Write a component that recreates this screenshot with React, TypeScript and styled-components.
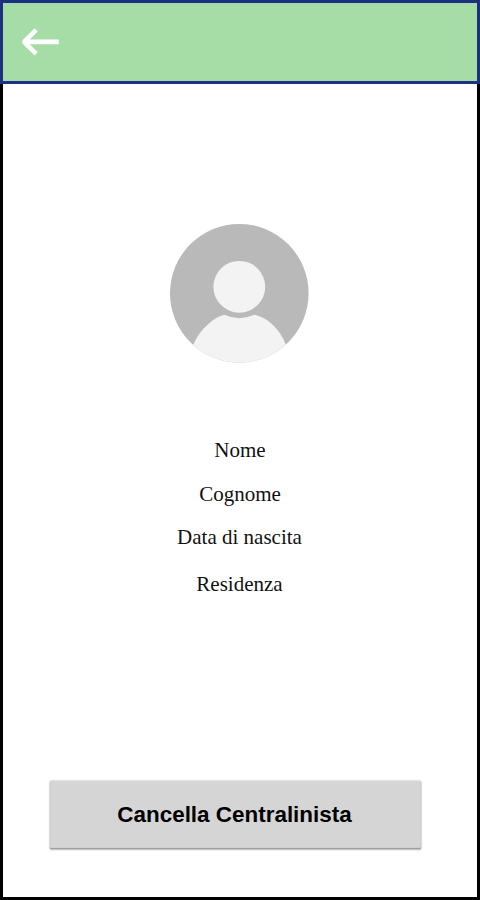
import React from "react";
import styled, { createGlobalStyle } from "styled-components";

const GlobalStyle = createGlobalStyle`
  * { box-sizing: border-box; }
  body { margin: 0; background: #fff; }
`;

const Screen = styled.div`
  width: 480px;
  height: 900px;
  display: flex;
  flex-direction: column;
  background: #fff;
`;

const Header = styled.header`
  height: 84px;
  flex: none;
  display: flex;
  align-items: center;
  padding-left: 18px;
  background: #a6dca6;
  border: 3px solid #1c317f;
`;

const BackButton = styled.button`
  display: flex;
  padding: 0;
  border: 0;
  background: none;
`;

const Content = styled.main`
  flex: 1;
  display: flex;
  flex-direction: column;
  align-items: center;
  padding-top: 139px;
  border: 3px solid #000;
  border-top: 0;
`;

const Avatar = styled.svg`
  display: block;
  flex: none;
`;

const Details = styled.div`
  margin-top: 73px;
  display: flex;
  flex-direction: column;
  align-items: center;
`;

const Detail = styled.span<{ $gap?: number; $nudge?: number }>`
  margin-top: ${({ $gap = 0 }) => $gap}px;
  padding-right: ${({ $nudge = 0 }) => $nudge}px;
  font: 21px/24px "Liberation Serif", "Times New Roman", serif;
  color: #111;
`;

const DeleteButton = styled.button`
  width: 371px;
  height: 68px;
  margin: 185px 9px 0 0;
  padding: 0 2px 1px 0;
  border: 0;
  border-radius: 1px;
  background: #d5d5d5;
  box-shadow: 0 0 2px rgba(0, 0, 0, 0.35), 0 1px 2px rgba(0, 0, 0, 0.2), inset 0 -1px 1px rgba(0, 0, 0, 0.28);
  font: bold 22.45px/26px "Liberation Sans", Arial, sans-serif;
  color: #000;
`;

export default function App() {
  return (
    <Screen>
      <GlobalStyle />
      <Header>
        <BackButton aria-label="Indietro">
          <svg width="40" height="30" viewBox="0 0 40 30" fill="none" stroke="#fff" strokeWidth="4.6">
            <path d="M37.8 14.9H4M15.2 2.9L3 14.9L15.2 26.9" strokeLinejoin="bevel" />
          </svg>
        </BackButton>
      </Header>
      <Content>
        <Avatar width="142" height="142" viewBox="0 0 142 142">
          <defs>
            <clipPath id="disc">
              <circle cx="70.3" cy="70.3" r="69.3" />
            </clipPath>
          </defs>
          <g clipPath="url(#disc)">
            <rect width="142" height="142" fill="#b9b9b9" />
            <path d="M10 142L23.8 123C31 105 46 94 55.4 91.8Q70.4 98.5 85.4 91.8C97 94 111 105 117.4 123L132 142Z" fill="#f3f3f3" />
            <circle cx="70.3" cy="63.8" r="25.9" fill="#f3f3f3" />
          </g>
        </Avatar>
        <Details>
          <Detail>Nome</Detail>
          <Detail $gap={20}>Cognome</Detail>
          <Detail $gap={19} $nudge={1}>Data di nascita</Detail>
          <Detail $gap={23} $nudge={1}>Residenza</Detail>
        </Details>
        <DeleteButton>Cancella Centralinista</DeleteButton>
      </Content>
    </Screen>
  );
}
